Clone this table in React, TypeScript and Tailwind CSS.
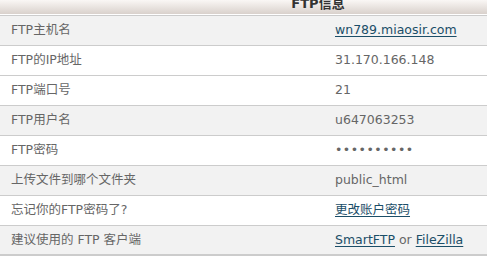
import React from "react";

const font = { fontFamily: '"DejaVu Sans", Verdana, "Noto Sans CJK SC", sans-serif' };

type Row = { label: string; value: React.ReactNode; gray: boolean };

const link = "text-[#1b4e68] underline underline-offset-2";

const rows: Row[] = [
  { label: "FTP主机名", value: <a className={link}>wn789.miaosir.com</a>, gray: true },
  { label: "FTP的IP地址", value: "31.170.166.148", gray: false },
  { label: "FTP端口号", value: "21", gray: false },
  { label: "FTP用户名", value: "u647063253", gray: true },
  { label: "FTP密码", value: <span className="tracking-[0.5px]">••••••••••</span>, gray: false },
  { label: "上传文件到哪个文件夹", value: "public_html", gray: true },
  { label: "忘记你的FTP密码了?", value: <a className={link}>更改账户密码</a>, gray: false },
  {
    label: "建议使用的 FTP 客户端",
    value: (
      <>
        <a className={link}>SmartFTP</a> or <a className={link}>FileZilla</a>
      </>
    ),
    gray: true,
  },
];

export default function App() {
  return (
    <div className="w-[487px] h-[264px] overflow-hidden bg-white" style={font}>
      <div className="w-[636px]">
        <div className="h-[14px] overflow-hidden bg-gradient-to-b from-[#faf7f5] to-[#d9d1cc]">
          <div className="-mt-[4px] text-center text-[13px] leading-[16px] font-bold text-[#333]">FTP信息</div>
        </div>
        <div className="h-px bg-white" />
        <div className="border-t border-[#cccccc]">
          {rows.map((r, i) => (
            <div
              key={i}
              className={`flex h-[30px] items-center border-b border-[#cccccc] text-[12.5px] text-[#666666] ${
                r.gray ? "bg-[#f2f2f2]" : "bg-white"
              } ${i === rows.length - 1 ? "border-b-2" : ""}`}
            >
              <div className="w-[324px] pl-[11px]">{r.label}</div>
              <div className="flex-1 pl-[11px]">{r.value}</div>
            </div>
          ))}
        </div>
      </div>
    </div>
  );
}
